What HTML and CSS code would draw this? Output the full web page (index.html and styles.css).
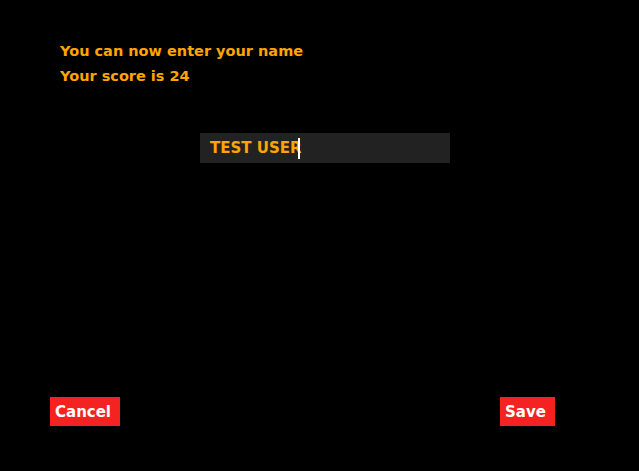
FILE: index.html
```html
<!DOCTYPE html>
<html>
<head>
<meta charset="utf-8">
<link rel="stylesheet" href="styles.css">
</head>
<body>
<div class="screen">
  <div class="message">
    <div class="line">You can now enter your name</div>
    <div class="line">Your score is 24</div>
  </div>
  <div class="field">
    <span class="value">TEST USER</span><span class="caret"></span>
  </div>
  <div class="spacer"></div>
  <div class="actions">
    <button class="btn btn-cancel">Cancel</button>
    <button class="btn btn-save">Save</button>
  </div>
</div>
</body>
</html>
```
FILE: styles.css
```css
html, body {
  margin: 0;
  padding: 0;
  background: #000;
  height: 100%;
}
.screen {
  height: 471px;
  box-sizing: border-box;
  display: flex;
  flex-direction: column;
  padding: 39px 0 45px 0;
  font-family: "DejaVu Sans", sans-serif;
  font-weight: bold;
}
.message {
  padding-left: 60px;
  color: #ffa500;
  font-size: 14.5px;
}
.line {
  height: 25px;
  line-height: 25px;
}
.field {
  margin: 44px 0 0 200px;
  width: 250px;
  height: 30px;
  background: #222;
  box-sizing: border-box;
  padding-left: 10px;
  display: flex;
  align-items: center;
  color: #ffa500;
  font-size: 15px;
}
.caret {
  display: inline-block;
  width: 2px;
  height: 21px;
  background: #fff;
  margin-left: -4px;
}
.spacer {
  flex: 1;
}
.actions {
  display: flex;
  justify-content: space-between;
  padding: 0 84px 0 50px;
}
.btn {
  font-family: inherit;
  font-weight: bold;
  font-size: 15px;
  color: #fff;
  background: #f52222;
  border: none;
  border-radius: 0;
  height: 29px;
  padding: 0 0 0 5px;
  margin: 0;
  text-align: left;
}
.btn-cancel {
  width: 70px;
}
.btn-save {
  width: 55px;
}
```
